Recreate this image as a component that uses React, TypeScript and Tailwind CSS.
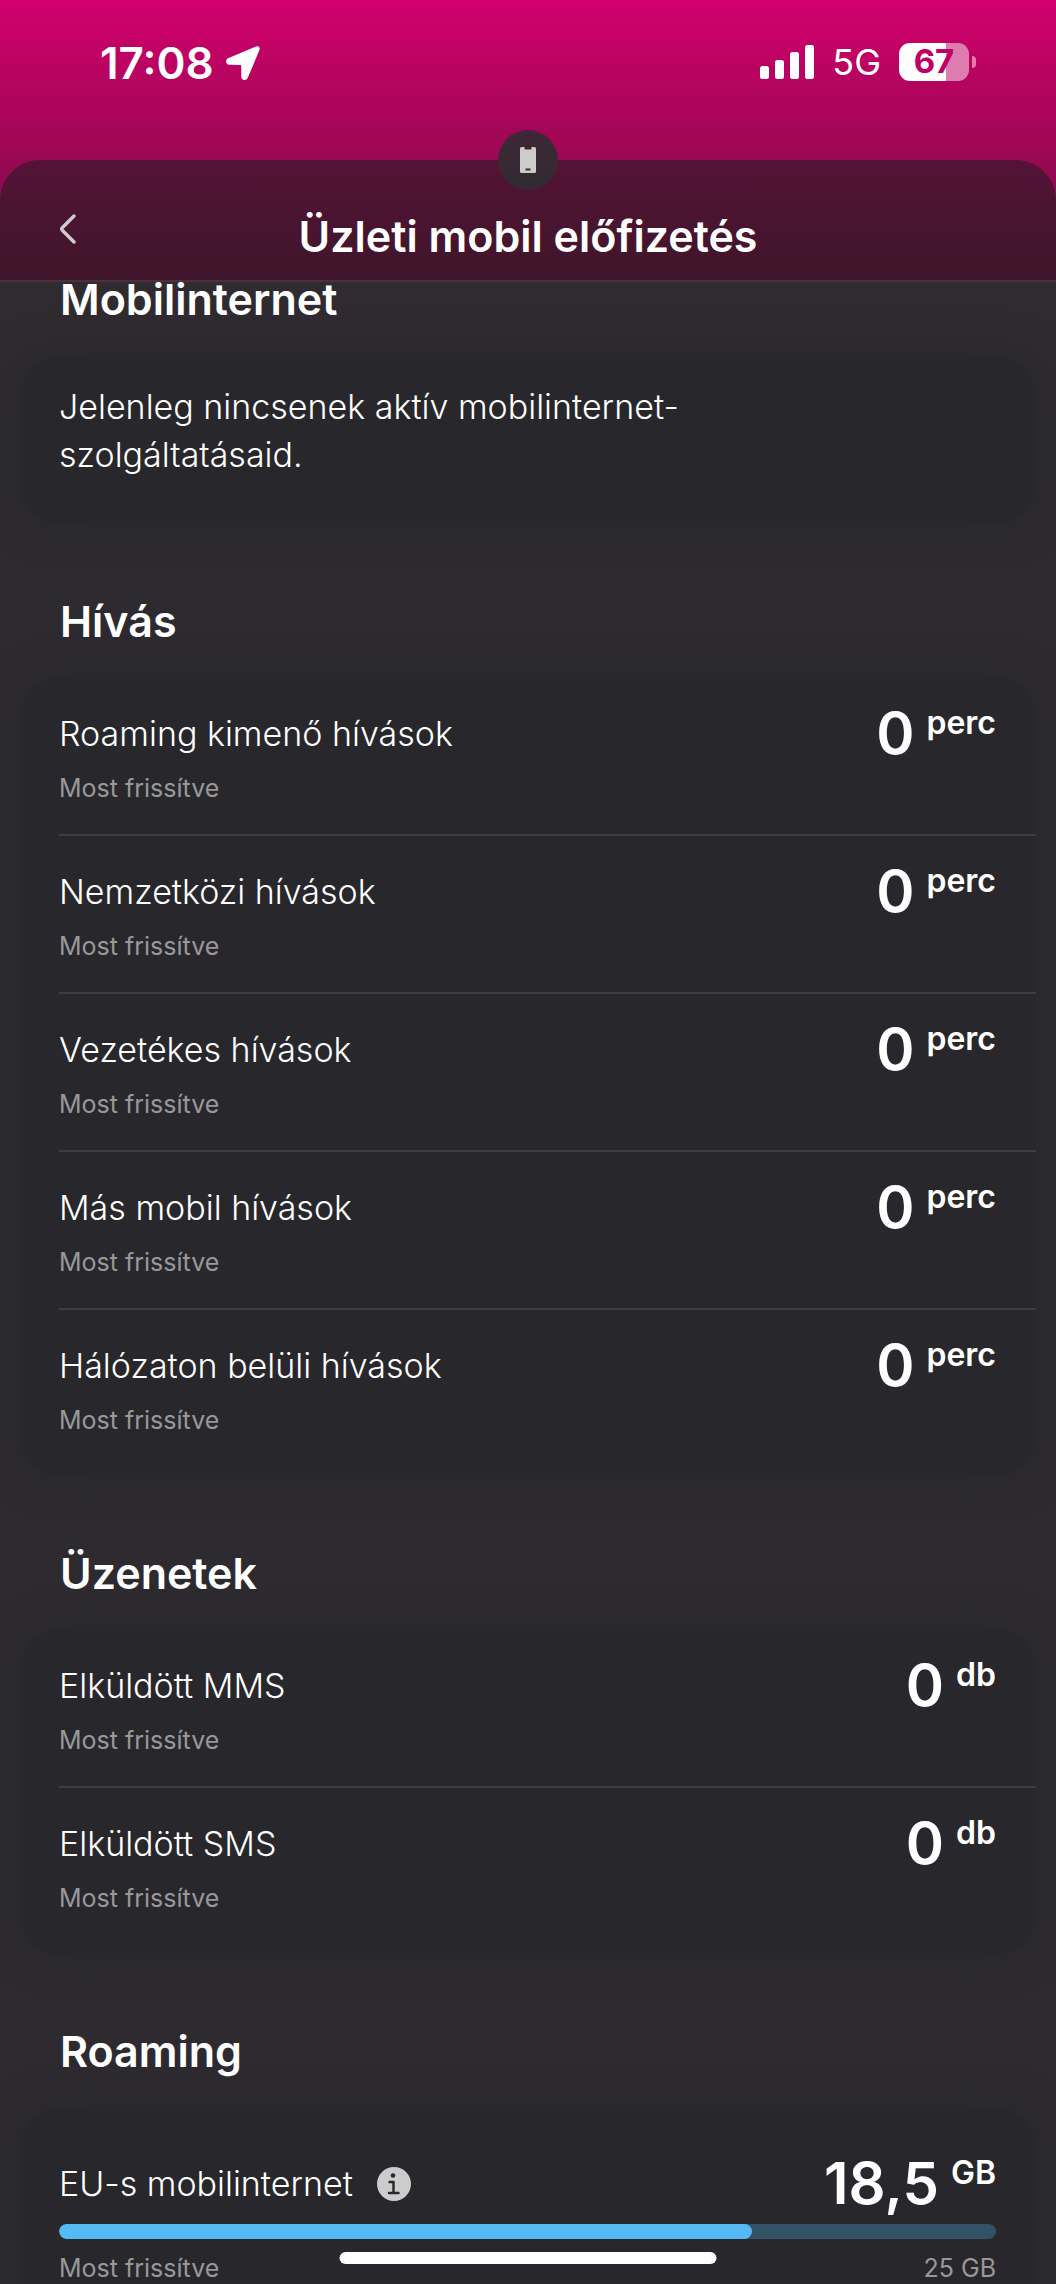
type Item = { name: string; value: string; unit: string };

const calls: Item[] = [
  { name: "Roaming kimenő hívások", value: "0", unit: "perc" },
  { name: "Nemzetközi hívások", value: "0", unit: "perc" },
  { name: "Vezetékes hívások", value: "0", unit: "perc" },
  { name: "Más mobil hívások", value: "0", unit: "perc" },
  { name: "Hálózaton belüli hívások", value: "0", unit: "perc" },
];

const messages: Item[] = [
  { name: "Elküldött MMS", value: "0", unit: "db" },
  { name: "Elküldött SMS", value: "0", unit: "db" },
];

function StatusBar() {
  return (
    <div className="flex h-[160px] items-start justify-between pt-9 pr-20 pl-[100px]">
      <div className="flex items-center gap-3 pt-1">
        <span className="text-[44px] leading-[46px] font-semibold">17:08</span>
        <svg className="h-[34px] w-[34px]" viewBox="0 0 34 34" fill="currentColor" aria-hidden="true">
          <path d="M30.3.4 2 12.2C-.9 13.500-.4 18.700 3 18.800l11.200.1c.7 0 1 .3 1 1l.1 11c.1 3.600 5 4.200 6.400 1.100L33.500 3.800C34.500 1.500 32.500-.500 30.300.400Z" />
        </svg>
      </div>
      <div className="flex items-center pt-[3px]">
        <svg className="h-[34px] w-[54px]" viewBox="0 0 54 34" fill="currentColor" aria-hidden="true">
          <rect x="0" y="21" width="9" height="13" rx="2.500" />
          <rect x="15" y="15" width="9" height="19" rx="2.500" />
          <rect x="30" y="7" width="9" height="27" rx="2.500" />
          <rect x="45" y="0" width="9" height="34" rx="2.500" />
        </svg>
        <span className="ml-[18px] text-[36px] leading-[46px]">5G</span>
        <div className="ml-[18px] flex items-center gap-[3px]">
          <div className="flex h-[38px] w-[70px] items-center justify-center rounded-[11px] bg-[linear-gradient(to_right,#fff_67%,#dd7cae_67%)] text-[33px] font-bold text-[#c00064]">
            67
          </div>
          <div className="h-3 w-1 rounded-r-full bg-[#dd7cae]" />
        </div>
      </div>
    </div>
  );
}

function Header() {
  return (
    <header className="relative h-[122px] shrink-0 rounded-t-[40px] border-b-2 border-[#4b3040] bg-linear-to-b from-[#541335] to-[#3f152b]">
      <div className="absolute -top-[30px] left-1/2 flex h-[60px] w-[60px] -translate-x-1/2 items-center justify-center rounded-full bg-linear-to-b from-[#3f2637] to-[#302b31]">
        <svg className="h-[26px] w-4" viewBox="0 0 16 26" aria-hidden="true">
          <path
            d="M1.500 0H4.500V1.500Q4.500 2.500 5.500 2.500H10.500Q11.500 2.500 11.500 1.500V0H14.500Q16 0 16 1.500V24.500Q16 26 14.500 26H1.500Q0 26 0 24.500V1.500Q0 0 1.500 0Z"
            fill="#ccc"
          />
          <rect x="5.500" y="21.500" width="5" height="2" fill="#342b33" />
        </svg>
      </div>
      <button type="button" aria-label="Vissza" className="absolute top-[50px] left-[55px] p-1">
        <svg className="h-[30px] w-[17px]" viewBox="0 0 17 30" fill="none" aria-hidden="true">
          <path d="M15 2 3.500 13.500q-1.500 1.500 0 3L15 28" stroke="#ccc" strokeWidth="3.400" strokeLinecap="round" />
        </svg>
      </button>
      <h1 className="pt-12 text-center text-[43px] leading-[56px] font-semibold">Üzleti mobil előfizetés</h1>
    </header>
  );
}

function Heading({ children }: { children: string }) {
  return <h2 className="pl-10 text-[43px] leading-[34px] font-semibold">{children}</h2>;
}

function Amount({ value, unit }: { value: string; unit: string }) {
  return (
    <div className="flex items-start gap-3 font-semibold">
      <span className="text-[58px] leading-[70px]">{value}</span>
      <span className="pt-1.5 text-[32px] leading-[38px]">{unit}</span>
    </div>
  );
}

function UsageCard({ items }: { items: Item[] }) {
  return (
    <ul className="mt-10 rounded-[40px] bg-[#28272b] pb-2 pl-[39px] shadow-[0_0_40px_#28272b]">
      {items.map((item) => (
        <li key={item.name} className="h-[158px] border-b-2 border-[#3e3d42] pt-5 pr-10 last:border-transparent">
          <div className="flex h-[66px] items-start justify-between">
            <span className="pt-3 text-[34px] leading-[48px] font-light">{item.name}</span>
            <Amount value={item.value} unit={item.unit} />
          </div>
          <p className="text-[25px] leading-[48px] text-[#98989a]">Most frissítve</p>
        </li>
      ))}
    </ul>
  );
}

export default function App() {
  return (
    <div className="flex h-screen flex-col overflow-hidden bg-[#2d2b30] font-[Inter,sans-serif] text-white">
      <div className="shrink-0 bg-[linear-gradient(to_bottom,#d2006d_0,#9a0852_160px,#880850_200px)]">
        <StatusBar />
        <Header />
      </div>

      <main className="flex flex-1 flex-col gap-20 overflow-y-auto bg-[linear-gradient(to_bottom,#302b31,#2d2b30_150px)] px-5 [scrollbar-width:none]">
        <section>
          <Heading>Mobilinternet</Heading>
          <div className="mt-10 h-[168px] rounded-[40px] bg-[#28272b] px-[39px] pt-[27px] shadow-[0_0_40px_#28272b]">
            <p className="max-w-[640px] text-[34px] leading-[48px] font-light">
              Jelenleg nincsenek aktív mobilinternet-szolgáltatásaid.
            </p>
          </div>
        </section>

        <section>
          <Heading>Hívás</Heading>
          <UsageCard items={calls} />
        </section>

        <section>
          <Heading>Üzenetek</Heading>
          <UsageCard items={messages} />
        </section>

        <section>
          <Heading>Roaming</Heading>
          <div className="mt-10 rounded-t-[40px] bg-[#28272b] pt-10 pr-10 pb-20 pl-[39px] shadow-[0_0_40px_#28272b]">
            <div className="flex h-[70px] items-start justify-between">
              <div className="flex items-center gap-6 pt-3">
                <span className="text-[34px] leading-[48px] font-light">EU-s mobilinternet</span>
                <button type="button" aria-label="Információ">
                  <svg className="h-[34px] w-[34px]" viewBox="0 0 34 34" aria-hidden="true">
                    <circle cx="17" cy="17" r="17" fill="#ccc" />
                    <circle cx="16" cy="8.500" r="2.300" fill="#28272b" />
                    <path d="M12.500 15H16.500V26M12 26H21.500" stroke="#28272b" strokeWidth="2.400" strokeLinecap="round" strokeLinejoin="round" fill="none" />
                  </svg>
                </button>
              </div>
              <Amount value="18,5" unit="GB" />
            </div>
            <div
              role="progressbar"
              aria-label="EU-s mobilinternet"
              aria-valuenow={18.5}
              aria-valuemin={0}
              aria-valuemax={25}
              className="mt-1.5 h-[15px] overflow-hidden rounded-full bg-[#345266]"
            >
              <div className="h-full w-[74%] rounded-full bg-[#55b9f3]" />
            </div>
            <div className="flex justify-between pt-[5px] text-[25px] leading-[48px] text-[#98989a]">
              <span>Most frissítve</span>
              <span>25 GB</span>
            </div>
          </div>
        </section>
      </main>

      <div className="fixed bottom-5 left-1/2 h-3 w-[377px] -translate-x-1/2 rounded-full bg-white" />
    </div>
  );
}
